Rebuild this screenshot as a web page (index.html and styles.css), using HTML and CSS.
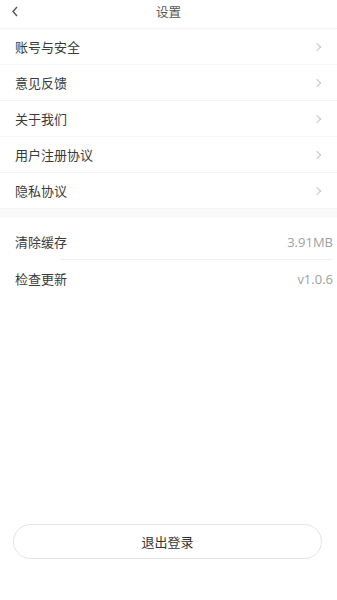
FILE: index.html
```html
<!DOCTYPE html>
<html lang="zh">
<head>
<meta charset="utf-8">
<link rel="stylesheet" href="styles.css">
</head>
<body>
<div class="page">
  <header class="nav">
    <span class="back"><svg width="8" height="11" viewBox="0 0 8 11"><path d="M6 1L2 5.5L6 10" fill="none" stroke="#555" stroke-width="1.4"/></svg></span>
    <span class="title">设置</span>
  </header>
  <ul class="group">
    <li class="row"><span>账号与安全</span><i class="chev"></i></li>
    <li class="row"><span>意见反馈</span><i class="chev"></i></li>
    <li class="row"><span>关于我们</span><i class="chev"></i></li>
    <li class="row"><span>用户注册协议</span><i class="chev"></i></li>
    <li class="row"><span>隐私协议</span><i class="chev"></i></li>
  </ul>
  <div class="band"></div>
  <ul class="group group2">
    <li class="row row2"><span>清除缓存</span><span class="val">3.91MB</span></li>
    <li class="row row2"><span>检查更新</span><span class="val">v1.0.6</span></li>
  </ul>
  <div class="spacer"></div>
  <div class="footer"><button class="logout">退出登录</button></div>
</div>
</body>
</html>
```
FILE: styles.css
```css
* { box-sizing: border-box; }
html, body { margin: 0; padding: 0; background: #fff; }
body { font-family: "Noto Sans CJK SC", "Noto Sans", sans-serif; color: #3a3a3a; }
.page { width: 337px; height: 600px; display: flex; flex-direction: column; }
.nav { height: 29px; display: flex; justify-content: center; padding-top: 3px; position: relative; border-bottom: 1px solid #f3f3f3; box-shadow: 0 1px 2px rgba(0,0,0,0.02); }
.back { position: absolute; left: 11px; top: 6px; display: flex; }
.title { font-size: 12.5px; line-height: 18px; color: #555; }
.group { list-style: none; margin: 0; padding: 0; }
.row { height: 36px; display: flex; align-items: center; justify-content: space-between; padding: 0 15px; font-size: 13px; border-bottom: 1px solid #f4f4f4; }
.chev { width: 6px; height: 6px; border-top: 1px solid #c4c4c4; border-right: 1px solid #c4c4c4; transform: rotate(45deg); margin-right: 2px; }
.band { height: 8px; background: #f9f9f9; }
.group2 { padding-top: 6px; }
.row2 { height: 37px; padding-right: 4px; border-bottom: none; position: relative; }
.row2:first-child::after { content: ""; position: absolute; left: 60px; right: 4px; bottom: 0; height: 1px; background: #f0f0f0; }
.val { color: #a0a0a0; font-family: "Open Sans", "Noto Sans", sans-serif; font-size: 13px; }
.spacer { flex: 1; }
.footer { padding: 0 15px 41px 13px; }
.logout { width: 100%; height: 35px; border: 1px solid #e4e4e4; border-radius: 18px; background: #fff; font-family: "Noto Sans CJK SC", sans-serif; font-size: 13px; color: #333; }
```
